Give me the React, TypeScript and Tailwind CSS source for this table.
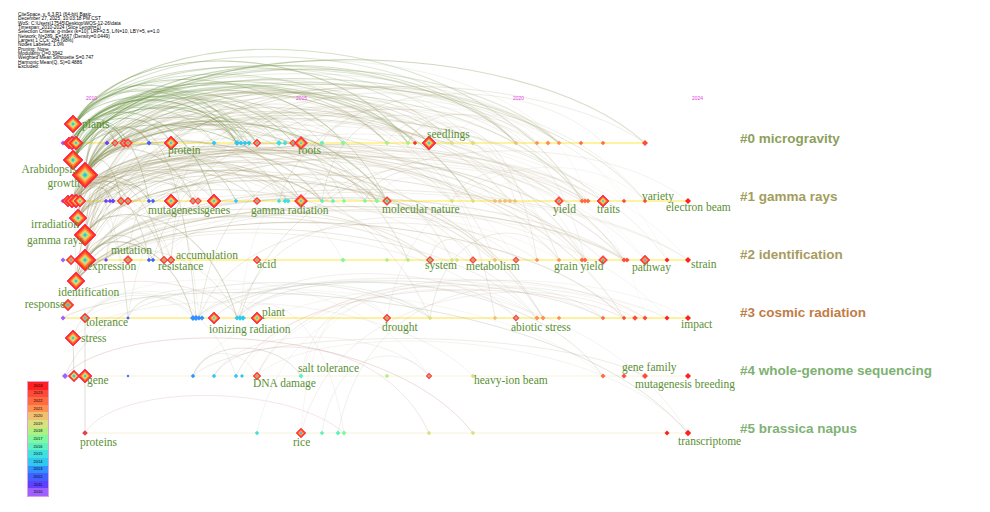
import React from "react";

type NT = "s" | "m" | "L";
type Node = [number, number, NT, number, string?];

const R0 = 143, R1 = 201, R2 = 260, R3 = 318, R4 = 376, R5 = 433;

const YEAR_COLORS = [
  "#a060ff", "#6a40ff", "#4060ff", "#3090ff", "#30c8f0", "#40e0e0", "#60f0c0", "#80f8a0",
  "#b0f080", "#d8e080", "#f0c070", "#ff9050", "#ff6a40", "#ff4a3a", "#ff2020",
];

function colorAt(x: number) {
  const yr = (x - 63) / 44.6 + 0.8;
  const i = Math.max(0, Math.min(14, Math.floor(yr)));
  return YEAR_COLORS[i];
}

const NODES: Node[] = [
  // row 0
  [63, R0, "s", 2.5], [69, R0, "L", 6], [72, R0, "L", 7], [76, R0, "L", 7],
  [107, R0, "s", 2.5], [115, R0, "m", 3.5], [124, R0, "m", 4.5], [128, R0, "m", 4.5], [149, R0, "s", 2.5],
  [171, R0, "L", 7], [214, R0, "s", 2.5], [237, R0, "s", 3], [241, R0, "s", 2.5], [245, R0, "s", 2.5],
  [249, R0, "s", 2.5], [257, R0, "m", 4], [279, R0, "s", 3], [285, R0, "s", 2.5], [293, R0, "m", 3.5],
  [301, R0, "L", 6.5], [322, R0, "s", 2.5], [343, R0, "s", 2.5], [387, R0, "s", 2.5], [408, R0, "s", 2.5],
  [415, R0, "s", 2.2, "#ff3030"], [429, R0, "L", 7], [452, R0, "s", 2.2], [473, R0, "s", 2.5],
  [516, R0, "s", 2.2], [537, R0, "s", 2.2], [548, R0, "s", 2.5], [559, R0, "s", 2.2], [581, R0, "s", 2.2],
  [603, R0, "s", 2.2], [645, R0, "s", 3],
  [73, 124, "L", 9], [73, 160, "L", 10], [85, 175, "L", 13],
  // row 1
  [63, R1, "s", 2.5], [68, R1, "L", 6], [72, R1, "L", 7], [76, R1, "L", 7], [80, R1, "L", 6],
  [106, R1, "s", 2.2], [110, R1, "s", 2.2], [113, R1, "s", 2.5], [121, R1, "m", 4], [128, R1, "m", 4],
  [149, R1, "s", 2.2], [153, R1, "s", 2.2], [171, R1, "L", 7], [193, R1, "m", 3.5], [198, R1, "m", 3.5],
  [214, R1, "L", 7], [236, R1, "s", 2.2], [257, R1, "m", 3.8], [279, R1, "s", 2.2], [285, R1, "s", 2.5],
  [288, R1, "s", 2.5], [301, R1, "L", 6.5], [322, R1, "s", 2.2], [333, R1, "s", 2.2], [344, R1, "s", 2.2],
  [365, R1, "s", 2.2], [377, R1, "s", 2.5], [387, R1, "m", 4.5, "#b8d080"], [452, R1, "s", 2.2],
  [473, R1, "s", 2.2], [495, R1, "s", 2.2], [500, R1, "s", 2.2], [505, R1, "s", 2.2], [510, R1, "s", 2.2],
  [515, R1, "s", 2.2], [559, R1, "m", 4.5], [582, R1, "s", 2.5], [585, R1, "s", 2.5], [588, R1, "s", 2.5],
  [603, R1, "L", 6], [624, R1, "s", 2.2], [645, R1, "s", 2.2], [688, R1, "s", 3],
  [78, 218, "L", 9], [85, 235, "L", 11],
  // row 2
  [63, R2, "s", 2.5], [71, R2, "m", 5], [85, R2, "L", 11], [106, R2, "s", 2], [128, R2, "m", 4.5],
  [149, R2, "s", 2.2], [153, R2, "s", 2.2], [164, R2, "m", 4], [171, R2, "m", 4], [257, R2, "m", 4],
  [343, R2, "s", 2.5], [387, R2, "s", 2.2], [408, R2, "s", 2.2], [430, R2, "m", 3.8, "#c8d070"],
  [452, R2, "s", 2.2], [457, R2, "s", 2.2], [473, R2, "m", 3.5], [495, R2, "s", 2.2], [516, R2, "m", 3.2],
  [537, R2, "s", 2.2], [559, R2, "s", 2.2], [582, R2, "s", 2.5], [585, R2, "s", 2.5], [603, R2, "m", 4.5],
  [624, R2, "s", 2.5], [627, R2, "s", 2.5], [645, R2, "m", 5], [667, R2, "s", 2.5], [688, R2, "s", 3],
  [76, 281, "L", 9],
  // row 3
  [63, R3, "s", 2.5], [85, R3, "m", 5, "#d8b070"], [128, R3, "s", 1.8], [193, R3, "s", 3], [196, R3, "s", 3],
  [199, R3, "s", 2.5], [202, R3, "s", 2.5], [214, R3, "L", 6], [237, R3, "s", 2.5], [240, R3, "s", 2.8],
  [243, R3, "s", 2.8], [257, R3, "L", 6], [387, R3, "m", 4], [430, R3, "s", 2.2], [495, R3, "s", 2.2],
  [516, R3, "m", 3.2], [537, R3, "s", 2.5], [543, R3, "s", 2.5], [559, R3, "s", 2.2], [603, R3, "s", 2.2],
  [624, R3, "s", 2.2], [635, R3, "s", 2.8], [645, R3, "s", 2.5], [667, R3, "s", 2.5], [688, R3, "s", 3],
  [68, 305, "m", 6, "#e0a050"], [73, 338, "L", 8],
  // row 4
  [65, R4, "s", 3], [74, R4, "m", 6, "#c8e080"], [85, R4, "L", 7], [128, R4, "s", 1.5], [193, R4, "s", 2.2],
  [214, R4, "s", 2.2], [236, R4, "s", 2.2], [242, R4, "s", 2], [257, R4, "m", 4], [301, R4, "s", 2.5],
  [387, R4, "s", 2.2], [429, R4, "m", 3], [473, R4, "s", 2.2], [603, R4, "s", 2.5], [624, R4, "s", 2.5],
  [645, R4, "s", 3], [688, R4, "s", 3],
  // row 5
  [85, R5, "s", 2.8, "#e04050"], [257, R5, "s", 2.2], [301, R5, "m", 5], [322, R5, "s", 2.2], [338, R5, "s", 2.5],
  [344, R5, "s", 2.5], [429, R5, "s", 2.2], [473, R5, "s", 2.2], [667, R5, "s", 2.5], [688, R5, "s", 3.2],
];

const LABELS: [string, number, number, ("start" | "end")?][] = [
  ["plants", 82, 128], ["protein", 168, 154], ["roots", 298, 154], ["seedlings", 427, 138],
  ["Arabidopsis", 77, 173, "end"], ["growth", 80, 187, "end"],
  ["irradiation", 79, 228, "end"], ["gamma rays", 83, 244, "end"],
  ["mutagenesis", 148, 214], ["genes", 204, 214], ["gamma radiation", 251, 214],
  ["molecular nature", 382, 213], ["yield", 553, 213], ["traits", 597, 213], ["variety", 642, 200],
  ["electron beam", 666, 211],
  ["mutation", 111, 254], ["expression", 87, 270], ["accumulation", 176, 259], ["resistance", 158, 270],
  ["acid", 257, 268], ["identification", 58, 296], ["system", 425, 269], ["metabolism", 466, 270],
  ["grain yield", 554, 270], ["pathway", 632, 271], ["strain", 691, 268],
  ["response", 65, 308, "end"], ["tolerance", 86, 326], ["stress", 81, 342], ["plant", 262, 316],
  ["ionizing radiation", 209, 333], ["drought", 382, 331], ["abiotic stress", 511, 331], ["impact", 681, 328],
  ["gene", 87, 384], ["DNA damage", 253, 387], ["salt tolerance", 298, 372], ["heavy-ion beam", 474, 384],
  ["gene family", 622, 371], ["mutagenesis breeding", 635, 388],
  ["proteins", 80, 446], ["rice", 293, 446], ["transcriptome", 678, 445],
];

function mulberry32(a: number) {
  return function () {
    a |= 0;
    a = (a + 0x6d2b79f5) | 0;
    let t = Math.imul(a ^ (a >>> 15), 1 | a);
    t = (t + Math.imul(t ^ (t >>> 7), 61 | t)) ^ t;
    return ((t ^ (t >>> 14)) >>> 0) / 4294967296;
  };
}

type P = { x: number; y: number };
type Arc = { d: string; s: string; w: number; o: number };

function buildArcs(): Arc[] {
  const rnd = mulberry32(20251227);
  const pick = <T,>(a: T[]) => a[Math.floor(rnd() * a.length)];
  const pts: P[] = NODES.map((n) => ({ x: n[0], y: n[1] }));
  const rowPts = (y: number, minX: number) => pts.filter((p) => p.y === y && p.x >= minX);
  const arcs: Arc[] = [];
  const mk = (s: P, t: P, cap: number, k: number) => {
    const dx = t.x - s.x;
    const h = Math.min(20 + dx * k, cap) * (0.8 + rnd() * 0.35);
    const top = Math.min(s.y, t.y) - h;
    return `M${s.x} ${s.y} C${(s.x + dx * 0.12).toFixed(1)} ${top.toFixed(1)} ${(t.x - dx * 0.22).toFixed(1)} ${top.toFixed(1)} ${t.x} ${t.y}`;
  };
  const leftTop: P[] = [{ x: 74, y: 143 }, { x: 73, y: 160 }, { x: 85, y: 175 }, { x: 70, y: 143 }, { x: 73, y: 128 }];
  const leftMid: P[] = [{ x: 85, y: 175 }, { x: 76, y: 201 }, { x: 78, y: 218 }, { x: 85, y: 235 }, { x: 85, y: 260 }, { x: 76, y: 281 }, { x: 72, y: 201 }];
  const t0 = rowPts(R0, 110);
  const t1 = rowPts(R1, 110);
  const t2 = rowPts(R2, 110);
  const t3 = rowPts(R3, 110);
  for (let i = 0; i < 65; i++) {
    const s = pick(leftTop);
    const t = rnd() < 0.7 ? pick(t0) : pick(t1);
    arcs.push({ d: mk(s, t, 100, 0.19), s: "url(#gGreen)", w: 0.5 + rnd() * 0.8, o: 0.18 + rnd() * 0.3 });
  }
  for (let i = 0; i < 110; i++) {
    const s = pick(leftMid);
    const r = rnd();
    const t = r < 0.2 ? pick(t0) : r < 0.55 ? pick(t1) : r < 0.85 ? pick(t2) : pick(t3);
    arcs.push({ d: mk(s, t, 85, 0.15), s: "url(#gTan)", w: 0.5 + rnd() * 0.8, o: 0.15 + rnd() * 0.25 });
  }
  const mids = pts.filter((p) => p.x > 100 && p.x < 460 && [R0, R1, R2, R3].includes(p.y));
  const all03 = pts.filter((p) => [R0, R1, R2, R3].includes(p.y));
  for (let i = 0; i < 55; i++) {
    const s = pick(mids);
    const cands = all03.filter((p) => p.x > s.x + 40);
    if (!cands.length) continue;
    const t = pick(cands);
    arcs.push({ d: mk(s, t, 70, 0.14), s: "url(#gTan)", w: 0.4 + rnd() * 0.5, o: 0.14 + rnd() * 0.2 });
  }
  const low = pts.filter((p) => p.y >= R3 - 15 && p.x < 340);
  const lowR = pts.filter((p) => p.y >= R3 - 20);
  for (let i = 0; i < 40; i++) {
    const s = pick(low);
    const cands = lowR.filter((p) => p.x > s.x + 60);
    if (!cands.length) continue;
    const t = pick(cands);
    const pinkish = rnd() < 0.35;
    arcs.push({ d: mk(s, t, 55, 0.12), s: pinkish ? "#c8968c" : "#b4b8a4", w: 0.4 + rnd() * 0.5, o: 0.2 + rnd() * 0.25 });
  }
  return arcs;
}

const ARCS = buildArcs();

function dia(x: number, y: number, r: number) {
  return `${x},${y - r} ${x + r},${y} ${x},${y + r} ${x - r},${y}`;
}

function NodeShape({ n }: { n: Node }) {
  const [x, y, t, r, c] = n;
  if (t === "s") {
    return <polygon points={dia(x, y, r)} fill={c ?? colorAt(x)} />;
  }
  if (t === "m") {
    return (
      <g>
        <polygon points={dia(x, y, r)} fill="#ff3a22" stroke="#ff2a60" strokeWidth={0.5} />
        <polygon points={dia(x, y, r * 0.62)} fill={c ?? "#ff9a55"} />
        <polygon points={dia(x, y, r * 0.28)} fill="#3cc0e0" />
      </g>
    );
  }
  const rings = [
    [1, "#ff2a1a"],
    [0.8, "#ff5a2a"],
    [0.62, "#ff9848"],
    [0.46, "#eed566"],
    [0.32, "#96e890"],
    [0.17, "#30bde6"],
  ] as const;
  return (
    <g>
      {rings.map(([f, col], i) => (
        <polygon key={i} points={dia(x, y, r * f)} fill={col} stroke={i === 0 ? "#ff1f7a" : "none"} strokeWidth={0.8} />
      ))}
    </g>
  );
}

const HEADER = [
  "CiteSpace, v. 6.3.R1 (64-bit) Basic",
  "December 27, 2025, 10:03:18 PM CST",
  "WoS: C:\\Users\\17545\\Desktop\\WOS-12-26\\data",
  "Timespan: 2010-2024 (Slice Length=1)",
  "Selection Criteria: g-index (k=10), LRF=2.5, L/N=10, LBY=5, e=1.0",
  "Network: N=289, E=1667 (Density=0.0449)",
  "Largest 1 CCs: 284 (98%)",
  "Nodes Labeled: 1.0%",
  "Pruning: None",
  "Modularity Q=0.3942",
  "Weighted Mean Silhouette S=0.747",
  "Harmonic Mean(Q, S)=0.4886",
  "Excluded:",
];

const CLUSTERS: [string, string][] = [
  ["#0 microgravity", "text-[#8d9f5b]"],
  ["#1 gamma rays", "text-[#a39d5d]"],
  ["#2 identification", "text-[#a89b5e]"],
  ["#3 cosmic radiation", "text-[#c17c46]"],
  ["#4 whole-genome sequencing", "text-[#7db172]"],
  ["#5 brassica napus", "text-[#80b276]"],
];

const LEGEND_BANDS: [string, string][] = [
  ["2024", "bg-[#ff2020]"], ["2023", "bg-[#ff4a3a]"], ["2022", "bg-[#ff6a40]"], ["2021", "bg-[#ff9050]"],
  ["2020", "bg-[#f0c070]"], ["2019", "bg-[#d8e080]"], ["2018", "bg-[#b0f080]"], ["2017", "bg-[#80f8a0]"],
  ["2016", "bg-[#60f0c0]"], ["2015", "bg-[#40e0e0]"], ["2014", "bg-[#30c8f0]"], ["2013", "bg-[#3090ff]"],
  ["2012", "bg-[#4060ff]"], ["2011", "bg-[#6040ff]"], ["2010", "bg-[#a060ff]"],
];

function Chart() {
  const rows = [
    { y: R0, x1: 63, x2: 645, w: 2, c: "#fff3a0" },
    { y: R1, x1: 63, x2: 688, w: 2, c: "#fff3a0" },
    { y: R2, x1: 63, x2: 688, w: 2, c: "#fff3a0" },
    { y: R3, x1: 63, x2: 688, w: 2.2, c: "#fff0a0" },
    { y: R4, x1: 65, x2: 688, w: 1.2, c: "#f6f3d8" },
    { y: R5, x1: 85, x2: 688, w: 1.2, c: "#f6f3d8" },
  ];
  return (
    <svg className="absolute inset-0" width={990} height={512} viewBox="0 0 990 512">
      <defs>
        <linearGradient id="gGreen" gradientUnits="userSpaceOnUse" x1="60" y1="0" x2="700" y2="0">
          <stop offset="0" stopColor="#5a8830" />
          <stop offset="0.45" stopColor="#8ea466" />
          <stop offset="1" stopColor="#d2cdb8" />
        </linearGradient>
        <linearGradient id="gTan" gradientUnits="userSpaceOnUse" x1="60" y1="0" x2="700" y2="0">
          <stop offset="0" stopColor="#8f8c58" />
          <stop offset="0.5" stopColor="#aea07a" />
          <stop offset="1" stopColor="#d8cfc0" />
        </linearGradient>
      </defs>
      {rows.map((r, i) => (
        <line key={i} x1={r.x1} y1={r.y} x2={r.x2} y2={r.y} stroke={r.c} strokeWidth={r.w} />
      ))}
      <line x1={85} y1={318} x2={85} y2={433} stroke="#c8c8c0" strokeWidth={0.6} />
      <line x1={73} y1={338} x2={74} y2={376} stroke="#c8c8c0" strokeWidth={0.6} />
      <line x1={73} y1={124} x2={76} y2={281} stroke="#d8d8c8" strokeWidth={0.5} />
      <g fill="none">
        {ARCS.map((a, i) => (
          <path key={i} d={a.d} stroke={a.s} strokeWidth={a.w} strokeOpacity={a.o} />
        ))}
      </g>
      {NODES.map((n, i) => (
        <NodeShape key={i} n={n} />
      ))}
      <g fontFamily="'Liberation Sans', Arial, sans-serif" fontSize={5} fill="#e23ee0">
        <text x={86} y={100}>2010</text>
        <text x={296} y={100}>2015</text>
        <text x={513} y={100}>2020</text>
        <text x={692} y={100}>2024</text>
      </g>
      <g fontFamily="'Liberation Serif', 'Times New Roman', serif" fontSize={11.5} fill="#5b8f35">
        {LABELS.map(([t, x, y, a], i) => (
          <text key={i} x={x} y={y} textAnchor={a ?? "start"}>
            {t}
          </text>
        ))}
      </g>
    </svg>
  );
}

export default function App() {
  return (
    <div className="relative h-[512px] w-[990px] overflow-hidden bg-white">
      <Chart />
      <div className="relative flex h-full">
        <div className="flex w-[740px] flex-col justify-between pb-[15px] pl-[18px] pt-[13px]">
          <div className="font-['Liberation_Sans',Arial,sans-serif] text-[4.8px] leading-[4.35px] text-black">
            {HEADER.map((l, i) => (
              <div key={i} className="h-[4.35px] whitespace-pre">{l}</div>
            ))}
          </div>
          <div className="ml-[9px] flex w-[22px] flex-col border border-[#e0a0e0]">
            {LEGEND_BANDS.map(([y, c]) => (
              <div
                key={y}
                className={`flex h-[7.6px] items-center justify-center font-['Liberation_Sans',Arial,sans-serif] text-[4px] leading-none text-black ${c}`}
              >
                {y}
              </div>
            ))}
          </div>
        </div>
        <div className="flex flex-col gap-[41px] pt-[130px] font-['Liberation_Sans',Arial,sans-serif] text-[13.5px] font-bold leading-[17px]">
          {CLUSTERS.map(([t, c]) => (
            <div key={t} className={`whitespace-nowrap ${c}`}>
              {t}
            </div>
          ))}
        </div>
      </div>
    </div>
  );
}
